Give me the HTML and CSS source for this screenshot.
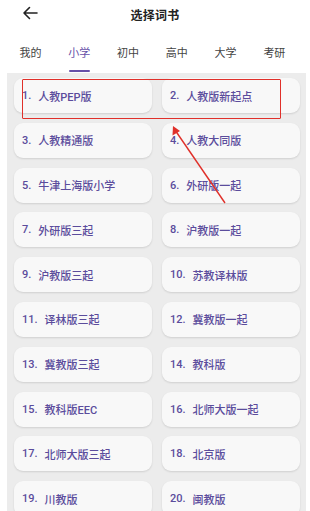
FILE: index.html
```html
<!DOCTYPE html>
<html lang="zh-CN">
<head>
<meta charset="UTF-8" />
<meta name="viewport" content="width=device-width, initial-scale=1.0"/>
<title>选择词书</title>
<link rel="stylesheet" href="styles.css">
</head>
<body>

<div class="topbar">
  <span class="back">
    <svg width="16" height="14" viewBox="0 0 16 14"><path d="M15 7H2M7.5 1.5L2 7l5.5 5.5" fill="none" stroke="#222" stroke-width="1.6" stroke-linecap="round" stroke-linejoin="round"/></svg>
  </span>
  <div class="title">选择词书</div>
</div>

<div class="tabs">
  <div class="tab">我的</div>
  <div class="tab active">小学</div>
  <div class="tab">初中</div>
  <div class="tab">高中</div>
  <div class="tab">大学</div>
  <div class="tab">考研</div>
</div>

<div class="books">
  <div class="grid">
    <div class="book"><span class="no">1.</span>人教PEP版</div>
    <div class="book"><span class="no">2.</span>人教版新起点</div>
    <div class="book"><span class="no">3.</span>人教精通版</div>
    <div class="book"><span class="no">4.</span>人教大同版</div>
    <div class="book"><span class="no">5.</span>牛津上海版小学</div>
    <div class="book"><span class="no">6.</span>外研版一起</div>
    <div class="book"><span class="no">7.</span>外研版三起</div>
    <div class="book"><span class="no">8.</span>沪教版一起</div>
    <div class="book"><span class="no">9.</span>沪教版三起</div>
    <div class="book"><span class="no">10.</span>苏教译林版</div>
    <div class="book"><span class="no">11.</span>译林版三起</div>
    <div class="book"><span class="no">12.</span>冀教版一起</div>
    <div class="book"><span class="no">13.</span>冀教版三起</div>
    <div class="book"><span class="no">14.</span>教科版</div>
    <div class="book"><span class="no">15.</span>教科版EEC</div>
    <div class="book"><span class="no">16.</span>北师大版一起</div>
    <div class="book"><span class="no">17.</span>北师大版三起</div>
    <div class="book"><span class="no">18.</span>北京版</div>
    <div class="book"><span class="no">19.</span>川教版</div>
    <div class="book"><span class="no">20.</span>闽教版</div>
  </div>
</div>

<!-- annotation drawn over the screenshot -->
<div class="mark-box"></div>
<svg class="mark-arrow" width="310" height="511" viewBox="0 0 310 511">
  <line x1="225" y1="203" x2="175" y2="130" stroke="#e0302a" stroke-width="1.4"/>
  <path d="M173 126L172.5 135.5L180 131Z" fill="#e0302a"/>
</svg>

</body>
</html>
```

FILE: styles.css
```css
* { margin: 0; padding: 0; box-sizing: border-box; }
html, body {
  width: 100%;
  height: 100%;
  overflow: hidden;
  background: #fff;
}
body {
  font-family: Roboto, "Noto Sans CJK SC", sans-serif;
  color: #222;
  position: relative;
}
.topbar {
  height: 28px;
  display: flex;
  align-items: center;
  justify-content: center;
  position: relative;
}
.back {
  position: absolute;
  left: 22px;
  top: 6px;
  display: flex;
}
.title {
  font-size: 12px;
  font-weight: 700;
  letter-spacing: 0.3px;
}
.tabs {
  height: 45px;
  display: flex;
  padding-left: 6px;
}
.tab {
  width: 48.8px;
  text-align: center;
  font-size: 11px;
  color: #444;
  padding-top: 16px;
  position: relative;
}
.tab.active { color: #6650a8; }
.tab.active::after {
  content: "";
  position: absolute;
  left: 14px;
  right: 14px;
  bottom: 1px;
  height: 2.5px;
  border-radius: 2px;
  background: #6650a8;
}
.books {
  margin: 0 4px 0 7px;
  background: #ececec;
  padding: 5px 6px 0 7px;
  min-height: 440px;
}
.grid {
  display: grid;
  grid-template-columns: 1fr 1fr;
  column-gap: 10px;
  row-gap: 9.8px;
}
.book {
  height: 35px;
  background: #f8f8f8;
  border-radius: 9px;
  box-shadow: 0 1px 2px rgba(0,0,0,0.12);
  display: flex;
  align-items: center;
  padding-left: 8px;
  font-size: 11px;
  font-weight: 500;
  color: #5b4c9c;
  white-space: nowrap;
}
.no { margin-right: 7px; }
.mark-box {
  position: absolute;
  left: 22px;
  top: 79px;
  width: 259px;
  height: 40px;
  border: 1.5px solid #e0302a;
  border-radius: 1px;
}
.mark-arrow {
  position: absolute;
  left: 0;
  top: 0;
  pointer-events: none;
}
```
